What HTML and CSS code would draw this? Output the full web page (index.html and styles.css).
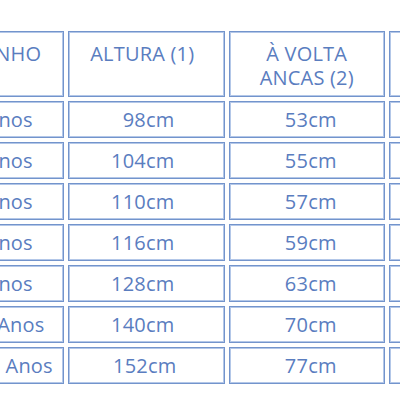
FILE: index.html
```html
<!DOCTYPE html>
<html lang="pt">
<head>
<meta charset="utf-8">
<title>Tabela de tamanhos</title>
<link rel="stylesheet" href="styles.css">
</head>
<body>
<table class="sizes">
  <colgroup>
    <col class="c"><col class="c"><col class="c"><col class="c">
  </colgroup>
  <thead>
    <tr>
      <th class="age">TAMANHO</th>
      <th class="h">ALTURA (1)</th>
      <th class="w">À VOLTA<br>ANCAS (2)</th>
      <th class="x"></th>
    </tr>
  </thead>
  <tbody>
    <tr><td class="age">3 Anos</td><td class="h">98cm</td><td class="w">53cm</td><td class="x"></td></tr>
    <tr><td class="age">4 Anos</td><td class="h">104cm</td><td class="w">55cm</td><td class="x"></td></tr>
    <tr><td class="age">5 Anos</td><td class="h">110cm</td><td class="w">57cm</td><td class="x"></td></tr>
    <tr><td class="age">6 Anos</td><td class="h">116cm</td><td class="w">59cm</td><td class="x"></td></tr>
    <tr><td class="age">8 Anos</td><td class="h">128cm</td><td class="w">63cm</td><td class="x"></td></tr>
    <tr><td class="age">10 Anos</td><td class="h">140cm</td><td class="w">70cm</td><td class="x"></td></tr>
    <tr class="last"><td class="age">12&nbsp;&nbsp;Anos</td><td class="h">152cm</td><td class="w">77cm</td><td class="x"></td></tr>
  </tbody>
</table>
</body>
</html>
```
FILE: styles.css
```css
html, body {
  margin: 0;
  padding: 0;
  background: #ffffff;
  width: 400px;
  height: 400px;
  overflow: hidden;
}

.sizes {
  border-collapse: separate;
  border-spacing: 4px;
  table-layout: fixed;
  width: 646px;
  margin-left: -96.5px;
  margin-top: 26.5px;
  font-family: "Open Sans", "DejaVu Sans", sans-serif;
  font-size: 20px;
  letter-spacing: 0.2px;
  color: #5a7dbf;
}

.sizes .c {
  width: 156.5px;
}

.sizes th,
.sizes td {
  box-sizing: border-box;
  border: 1px solid #7394cc;
  box-shadow: inset 0 0 0 1px #b3c7e8;
  padding: 0;
  font-weight: normal;
  white-space: nowrap;
  overflow: hidden;
}

.sizes th {
  height: 66px;
  line-height: 24px;
  vertical-align: top;
  padding-top: 10px;
  text-align: center;
}

.sizes th.age {
  padding-left: 10px;
}

.sizes th.h {
  padding-right: 8px;
}

.sizes td {
  height: 37.1px;
  line-height: 24px;
  vertical-align: middle;
  padding-top: 1px;
}

.sizes td.age {
  text-align: left;
  padding-left: 60px;
}

.sizes .last td.age {
  padding-left: 63px;
}

.sizes td.h {
  text-align: right;
  padding-right: 49px;
}

.sizes .last td.h {
  padding-right: 47px;
}

.sizes td.w {
  text-align: center;
  padding-left: 8px;
}
```
